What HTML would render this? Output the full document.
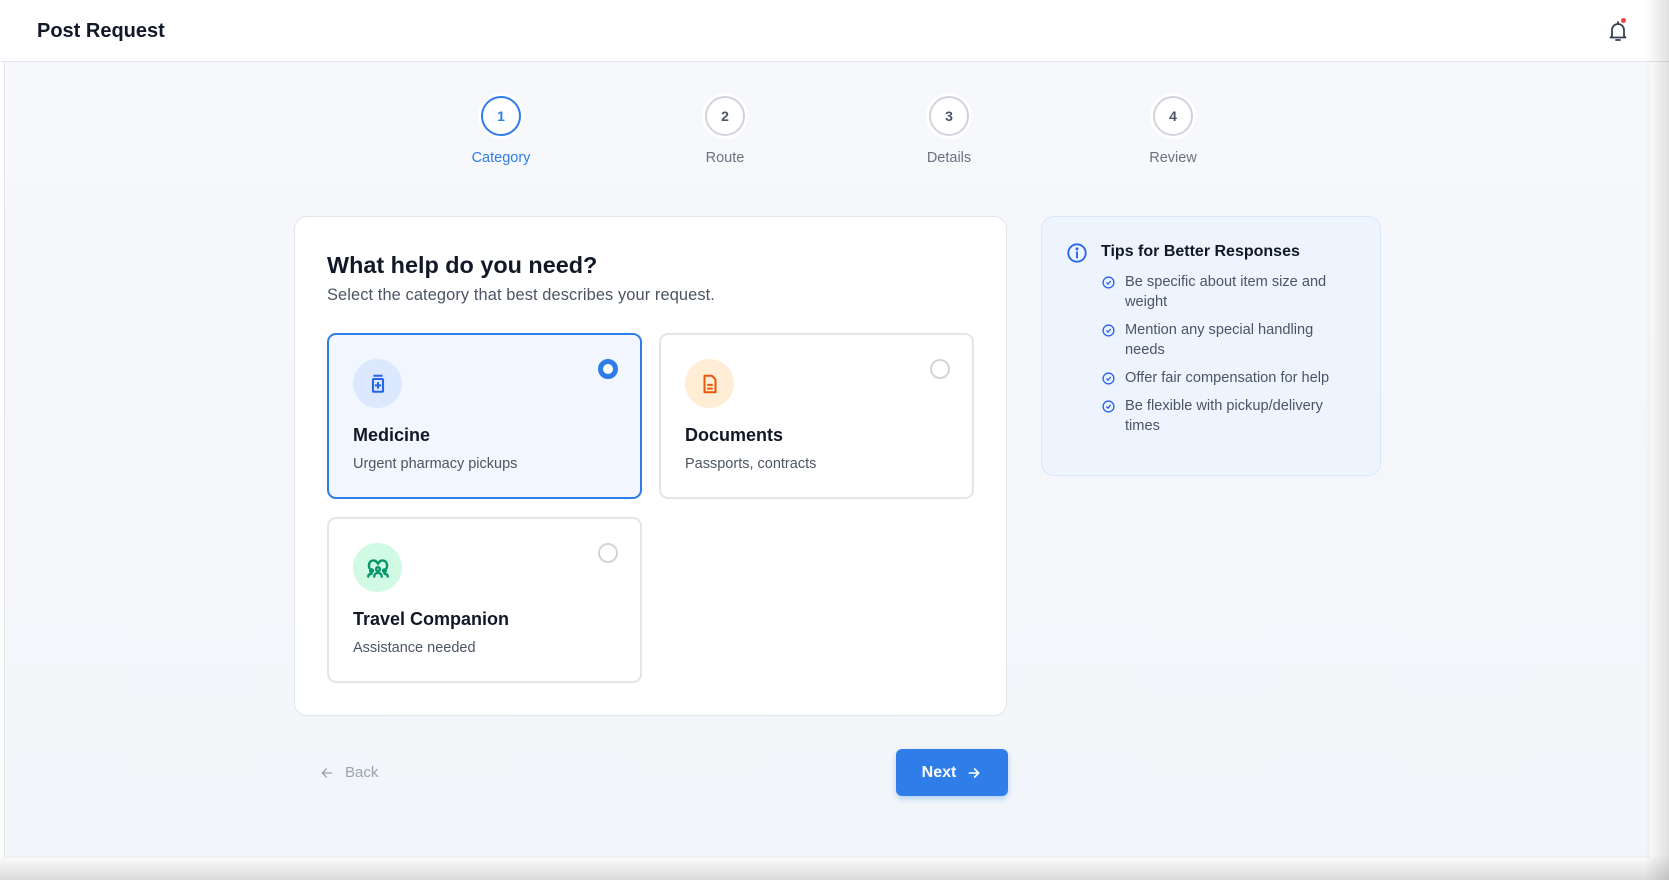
<!DOCTYPE html>
<html><head><meta charset="utf-8"><style>
*{box-sizing:border-box;margin:0;padding:0}
body{width:1669px;height:880px;overflow:hidden;background:#fff;font-family:"Liberation Sans",sans-serif;color:#111827;position:relative}
.frame{position:absolute;left:4px;top:0;width:1646px;height:858px;background:linear-gradient(#f7f8fb,#f2f5f9);border-left:1px solid #e5e7eb}
.shadowR{position:absolute;right:0;top:0;width:24px;height:880px;background:linear-gradient(90deg,rgba(0,0,0,0),rgba(0,0,0,.12))}
.shadowB{position:absolute;left:0;bottom:0;width:1669px;height:26px;background:linear-gradient(rgba(0,0,0,0),rgba(0,0,0,.14))}
.hdr{position:absolute;left:0;top:0;width:100%;height:62px;background:#fff;border-bottom:1px solid #e3e6ec}
.hdr h1{position:absolute;left:37px;top:20px;font-size:20px;font-weight:700;color:#111827}
.abs{position:absolute}
.step{position:absolute;width:40px;height:40px;border-radius:50%;border:2px solid #d1d5db;background:#fff;box-shadow:0 0 0 3px #fff;font-size:14px;font-weight:700;color:#4b5563;display:flex;align-items:center;justify-content:center}
.lbl{position:absolute;width:120px;text-align:center;font-size:14.5px;color:#6b7280}
.card{position:absolute;left:294px;top:216px;width:713px;height:500px;background:#fff;border:1px solid #e3e6ec;border-radius:13px}
.opt{position:absolute;width:315px;height:166px;border:2px solid #e3e5e9;border-radius:9px;background:#fff}
.opt.sel{border-color:#2f7de9;background:#f2f7ff}
.ic{position:absolute;left:24px;top:24px;width:49px;height:49px;border-radius:50%;display:flex;align-items:center;justify-content:center}
.opt h3{position:absolute;left:24px;top:90px;font-size:18px;font-weight:700}
.opt p{position:absolute;left:24px;top:121px;font-size:14.5px;color:#4b5563}
.rad{position:absolute;right:22px;top:24px;width:20px;height:20px;border-radius:50%;border:2px solid #d1d5db}
.rad.on{border:5.5px solid #2f7de9;background:#fff}
.tips{position:absolute;left:1041px;top:216px;width:340px;height:260px;background:#eef4fe;border:1px solid #d9e6fb;border-radius:13px}
.tips li{list-style:none;position:absolute;left:83px;font-size:14.6px;line-height:19.5px;color:#4b5563;width:228px}
.tips svg.ck{position:absolute;left:-23px;top:3px}
</style></head><body>
<div class="frame"></div>
<div class="hdr"><h1>Post Request</h1>
<svg class="abs" style="left:1606px;top:19px" width="24" height="24" viewBox="0 0 24 24" fill="none" stroke="#374151" stroke-width="1.8" stroke-linecap="round" stroke-linejoin="round"><path d="M6 17V11a6 6 0 0 1 12 0v6l1.5 1.5h-15z"/><path d="M10 21h4"/><path d="M12 3v2"/></svg>
<div class="abs" style="left:1621px;top:18px;width:5px;height:5px;border-radius:50%;background:#ef4444"></div>
</div>

<div class="step" style="left:481px;top:96px;border-color:#2f7de9;color:#2f7de9">1</div>
<div class="step" style="left:705px;top:96px">2</div>
<div class="step" style="left:929px;top:96px">3</div>
<div class="step" style="left:1153px;top:96px">4</div>
<div class="lbl" style="left:441px;top:150px;color:#2f7de9">Category</div>
<div class="lbl" style="left:665px;top:150px">Route</div>
<div class="lbl" style="left:889px;top:150px">Details</div>
<div class="lbl" style="left:1113px;top:150px">Review</div>

<div class="card">
<div class="abs" style="left:32px;top:35px;font-size:23.4px;font-weight:700">What help do you need?</div>
<div class="abs" style="left:32px;top:69px;font-size:16.4px;color:#4b5563;letter-spacing:.1px">Select the category that best describes your request.</div>

<div class="opt sel" style="left:32px;top:116px">
<div class="ic" style="background:#dbe8fd"><svg width="22" height="22" viewBox="0 0 24 24" fill="none" stroke="#2563eb" stroke-width="2.2"><path d="M7 3h10"/><rect x="6.5" y="6.5" width="11" height="14" rx="1"/><path d="M12 10v7M8.5 13.5h7"/></svg></div>
<div class="rad on"></div><h3>Medicine</h3><p>Urgent pharmacy pickups</p></div>

<div class="opt" style="left:364px;top:116px">
<div class="ic" style="background:#ffedd5"><svg width="22" height="22" viewBox="0 0 24 24" fill="none" stroke="#ea580c" stroke-width="2.2" stroke-linejoin="round"><path d="M6 3h8l4 4v14H6z"/><path d="M9 13h6M9 17h6"/></svg></div>
<div class="rad"></div><h3>Documents</h3><p>Passports, contracts</p></div>

<div class="opt" style="left:32px;top:300px">
<div class="ic" style="background:#d1fae5"><svg width="26" height="26" viewBox="0 0 24 24" fill="none" stroke="#059669" stroke-width="2.2" stroke-linecap="round"><path d="M4 12c-1-3 0-7 4-7 2 0 3 1.5 4 3 1-1.5 2-3 4-3 4 0 5 4 4 7"/><circle cx="12" cy="13" r="1.8"/><path d="M8.5 20c0-2 1.5-3.5 3.5-3.5s3.5 1.5 3.5 3.5"/><circle cx="6" cy="14.5" r="1.3"/><circle cx="18" cy="14.5" r="1.3"/><path d="M3 20c0-1.5 1-2.5 3-2.5M21 20c0-1.5-1-2.5-3-2.5"/></svg></div>
<div class="rad"></div><h3>Travel Companion</h3><p>Assistance needed</p></div>
</div>

<div class="tips">
<svg class="abs" style="left:24px;top:25px" width="22" height="22" viewBox="0 0 24 24" fill="none" stroke="#2563eb" stroke-width="2"><circle cx="12" cy="12" r="9.5"/><path d="M12 11v6" stroke-linecap="round"/><circle cx="12" cy="7.5" r=".6" fill="#2563eb"/></svg>
<div class="abs" style="left:59px;top:26px;font-size:16px;font-weight:700;color:#111827">Tips for Better Responses</div>
<ul>
<li style="top:56px"><svg class="ck" width="13" height="13" viewBox="0 0 24 24" fill="none" stroke="#2563eb" stroke-width="2.4"><circle cx="12" cy="12" r="10"/><path d="M8 12l3 3 5-6"/></svg>Be specific about item size and weight</li>
<li style="top:104px"><svg class="ck" width="13" height="13" viewBox="0 0 24 24" fill="none" stroke="#2563eb" stroke-width="2.4"><circle cx="12" cy="12" r="10"/><path d="M8 12l3 3 5-6"/></svg>Mention any special handling needs</li>
<li style="top:152px"><svg class="ck" width="13" height="13" viewBox="0 0 24 24" fill="none" stroke="#2563eb" stroke-width="2.4"><circle cx="12" cy="12" r="10"/><path d="M8 12l3 3 5-6"/></svg>Offer fair compensation for help</li>
<li style="top:180px"><svg class="ck" width="13" height="13" viewBox="0 0 24 24" fill="none" stroke="#2563eb" stroke-width="2.4"><circle cx="12" cy="12" r="10"/><path d="M8 12l3 3 5-6"/></svg>Be flexible with pickup/delivery times</li>
</ul>
</div>

<svg class="abs" style="left:319px;top:765px" width="16" height="16" viewBox="0 0 24 24" fill="none" stroke="#9ca3af" stroke-width="2" stroke-linecap="round" stroke-linejoin="round"><path d="M19 12H5M11 6l-6 6 6 6"/></svg>
<div class="abs" style="left:345px;top:764px;font-size:15px;color:#9ca3af">Back</div>

<div class="abs" style="left:896px;top:749px;width:112px;height:47px;background:#2f7de9;border-radius:6px;box-shadow:0 3px 6px rgba(47,125,233,.3);color:#fff;font-size:16px;font-weight:700;display:flex;align-items:center;justify-content:center;gap:10px">Next<svg width="16" height="16" viewBox="0 0 24 24" fill="none" stroke="#fff" stroke-width="2.4" stroke-linecap="round" stroke-linejoin="round"><path d="M5 12h14M13 6l6 6-6 6"/></svg></div>

<div class="shadowR"></div><div class="shadowB"></div>
</body></html>
